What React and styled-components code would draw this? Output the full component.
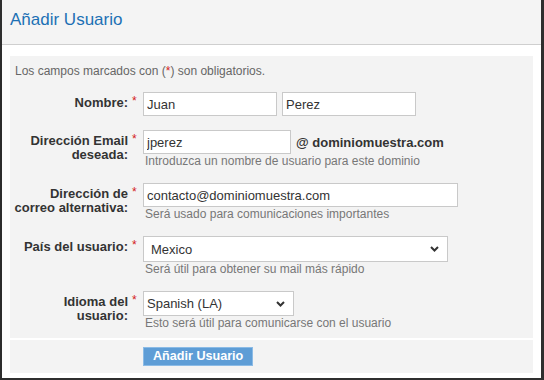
import React from 'react';
import styled, { createGlobalStyle } from 'styled-components';

const GlobalStyle = createGlobalStyle`
  body {
    margin: 0;
    background: #fff;
    font-family: "Liberation Sans", Arial, sans-serif;
  }
`;

const Frame = styled.div`
  width: 544px;
  height: 380px;
  box-sizing: border-box;
  border: 2px solid #2e2e2e;
  border-top: 0;
  border-right-width: 3px;
  background: #fff;
  display: flex;
  flex-direction: column;
`;

const Header = styled.div`
  flex: none;
  height: 45px;
  box-sizing: border-box;
  padding: 10px 8px 0;
  background: #f4f4f4;
  border-bottom: 1px solid #cfcfcf;
`;

const Title = styled.h1`
  margin: 0;
  font-size: 17px;
  line-height: 20px;
  font-weight: normal;
  color: #1c70b4;
`;

const Body = styled.div`
  padding: 11px 8px 5px;
`;

const Panel = styled.div`
  background: #f3f3f3;
`;

const Notice = styled.p`
  margin: 0;
  padding: 8px 5px 0;
  font-size: 12px;
  line-height: 14px;
  color: #666;
`;

const Fields = styled.div`
  padding: 14px 0 8px;
`;

const Row = styled.div`
  display: grid;
  grid-template-columns: 118px 15px 1fr;
  margin-top: ${p => p.$gap || 0}px;
`;

const Label = styled.label`
  text-align: right;
  font-size: 13px;
  font-weight: bold;
  line-height: 14px;
  padding-top: 4px;
  color: #333;
`;

const Req = styled.span`
  color: #d42020;
  font-size: 12px;
  line-height: 12px;
  padding: 3px 0 0 4px;
`;

const Field = styled.div`
  display: flex;
  flex-direction: column;
  align-items: flex-start;
`;

const InputLine = styled.div`
  display: flex;
  align-items: center;
  gap: 5px;
`;

const TextInput = styled.input`
  width: ${p => p.$w}px;
  height: 24px;
  box-sizing: border-box;
  padding: 0 3px;
  border: 1px solid #c9c9c9;
  background: #fff;
  font-family: inherit;
  font-size: 13px;
  color: #333;
  outline: none;
`;

const Domain = styled.span`
  font-size: 13px;
  font-weight: bold;
  color: #333;
`;

const SelectBox = styled.div`
  position: relative;
  width: ${p => p.$w}px;
  height: ${p => p.$h}px;
`;

const Select = styled.select`
  appearance: none;
  width: 100%;
  height: 100%;
  box-sizing: border-box;
  padding: 0 24px 0 ${p => p.$pad}px;
  border: 1px solid #c9c9c9;
  border-radius: 0;
  background: #fff;
  font-family: inherit;
  font-size: 13px;
  color: #333;
  outline: none;
`;

const Chevron = styled.svg`
  position: absolute;
  right: 9px;
  top: 50%;
  margin-top: -3px;
  pointer-events: none;
`;

const Hint = styled.div`
  margin-top: 1px;
  padding-left: 2px;
  font-size: 12px;
  line-height: 13px;
  color: #777;
`;

const ButtonRow = styled.div`
  border-top: 2px solid #fff;
  padding: 6px 0 7px 133px;
`;

const Button = styled.button`
  height: 19px;
  padding: 0 9px;
  border: 1px solid #8bbbe6;
  background: #5e9dd6;
  color: #fff;
  font-family: inherit;
  font-size: 12.6px;
  font-weight: bold;
  line-height: 17px;
  cursor: pointer;
`;

const Star = styled.span`
  color: #d42020;
`;

function Dropdown({ w, h, pad, value, options }) {
  return (
    <SelectBox $w={w} $h={h}>
      <Select $pad={pad} defaultValue={value}>
        {options.map(o => <option key={o}>{o}</option>)}
      </Select>
      <Chevron width="9" height="6" viewBox="0 0 9 6">
        <path d="M1 1l3.5 3.5L8 1" fill="none" stroke="#333" strokeWidth="2" />
      </Chevron>
    </SelectBox>
  );
}

export default function App() {
  return (
    <>
      <GlobalStyle />
      <Frame>
        <Header>
          <Title>Añadir Usuario</Title>
        </Header>
        <Body>
          <Panel>
            <Notice>Los campos marcados con (<Star>*</Star>) son obligatorios.</Notice>
            <Fields>
              <Row>
                <Label>Nombre:</Label>
                <Req>*</Req>
                <Field>
                  <InputLine>
                    <TextInput $w={134} defaultValue="Juan" />
                    <TextInput $w={134} defaultValue="Perez" />
                  </InputLine>
                </Field>
              </Row>
              <Row $gap={14}>
                <Label>Dirección Email deseada:</Label>
                <Req>*</Req>
                <Field>
                  <InputLine>
                    <TextInput $w={148} defaultValue="jperez" />
                    <Domain>@ dominiomuestra.com</Domain>
                  </InputLine>
                  <Hint>Introduzca un nombre de usuario para este dominio</Hint>
                </Field>
              </Row>
              <Row $gap={15}>
                <Label>Dirección de correo alternativa:</Label>
                <Req>*</Req>
                <Field>
                  <TextInput $w={315} defaultValue="contacto@dominiomuestra.com" />
                  <Hint>Será usado para comunicaciones importantes</Hint>
                </Field>
              </Row>
              <Row $gap={15}>
                <Label>País del usuario:</Label>
                <Req>*</Req>
                <Field>
                  <Dropdown w={305} h={26} pad={7} value="Mexico" options={['Argentina', 'Chile', 'Colombia', 'Mexico', 'Perú']} />
                  <Hint>Será útil para obtener su mail más rápido</Hint>
                </Field>
              </Row>
              <Row $gap={15}>
                <Label>Idioma del usuario:</Label>
                <Req>*</Req>
                <Field>
                  <Dropdown w={151} h={25} pad={3} value="Spanish (LA)" options={['English', 'Spanish (LA)', 'Spanish (ES)', 'Português']} />
                  <Hint>Esto será útil para comunicarse con el usuario</Hint>
                </Field>
              </Row>
            </Fields>
            <ButtonRow>
              <Button>Añadir Usuario</Button>
            </ButtonRow>
          </Panel>
        </Body>
      </Frame>
    </>
  );
}
